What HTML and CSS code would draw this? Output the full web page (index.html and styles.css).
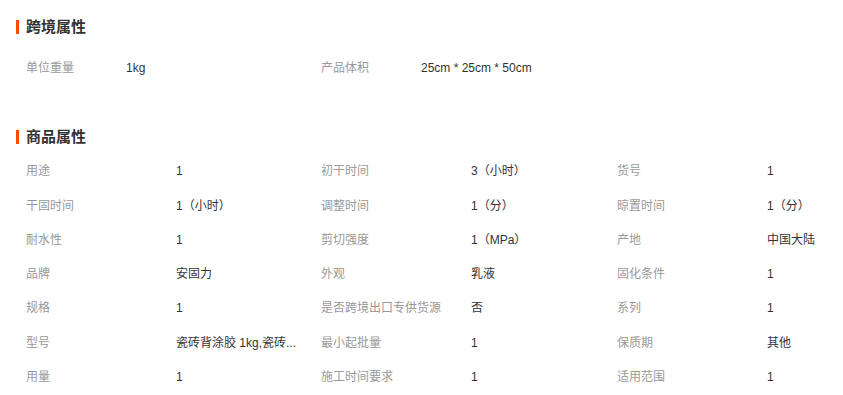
FILE: index.html
```html
<!DOCTYPE html>
<html lang="zh-CN">
<head>
<meta charset="utf-8">
<title>属性</title>
<link rel="stylesheet" href="styles.css">
</head>
<body>
<div class="page">
  <section class="block block-cross">
    <h2 class="title">跨境属性</h2>
    <div class="grid grid-cross">
      <div class="label">单位重量</div><div class="value">1kg</div>
      <div class="label">产品体积</div><div class="value">25cm * 25cm * 50cm</div>
    </div>
  </section>
  <section class="block block-goods">
    <h2 class="title">商品属性</h2>
    <div class="grid grid-goods">
      <div class="label">用途</div><div class="value">1</div>
      <div class="label">初干时间</div><div class="value">3（小时）</div>
      <div class="label">货号</div><div class="value">1</div>

      <div class="label">干固时间</div><div class="value">1（小时）</div>
      <div class="label">调整时间</div><div class="value">1（分）</div>
      <div class="label">晾置时间</div><div class="value">1（分）</div>

      <div class="label">耐水性</div><div class="value">1</div>
      <div class="label">剪切强度</div><div class="value">1（MPa）</div>
      <div class="label">产地</div><div class="value">中国大陆</div>

      <div class="label">品牌</div><div class="value">安固力</div>
      <div class="label">外观</div><div class="value">乳液</div>
      <div class="label">固化条件</div><div class="value">1</div>

      <div class="label">规格</div><div class="value">1</div>
      <div class="label">是否跨境出口专供货源</div><div class="value">否</div>
      <div class="label">系列</div><div class="value">1</div>

      <div class="label">型号</div><div class="value">瓷砖背涂胶 1kg,瓷砖...</div>
      <div class="label">最小起批量</div><div class="value">1</div>
      <div class="label">保质期</div><div class="value">其他</div>

      <div class="label">用量</div><div class="value">1</div>
      <div class="label">施工时间要求</div><div class="value">1</div>
      <div class="label">适用范围</div><div class="value">1</div>
    </div>
  </section>
</div>
</body>
</html>
```

FILE: styles.css
```css
html, body {
  margin: 0;
  padding: 0;
  background: #ffffff;
}

body {
  font-family: "Liberation Sans", "Noto Sans CJK SC", sans-serif;
  font-size: 12px;
  color: #333333;
}

.page {
  padding: 10px 0 0 16px;
}

.title {
  margin: 0;
  height: 34px;
  line-height: 34px;
  font-size: 15px;
  font-weight: bold;
  color: #333333;
  display: flex;
  align-items: center;
  gap: 7px;
}

.title::before {
  content: "";
  display: block;
  width: 3px;
  height: 14px;
  background: #ff4a00;
}

.grid {
  display: grid;
  padding-left: 10px;
  grid-auto-rows: 34.25px;
  align-items: center;
}

.grid-cross {
  margin-top: 7px;
  grid-template-columns: 100px 195px 100px 1fr;
}

.block-goods {
  margin-top: 35px;
}

.grid-goods {
  grid-template-columns: 150px 145px 150px 146px 150px 1fr;
}

.label,
.value {
  line-height: 20px;
  white-space: nowrap;
  min-width: 0;
}

.label {
  color: #999999;
}

.value {
  color: #333333;
}
```
